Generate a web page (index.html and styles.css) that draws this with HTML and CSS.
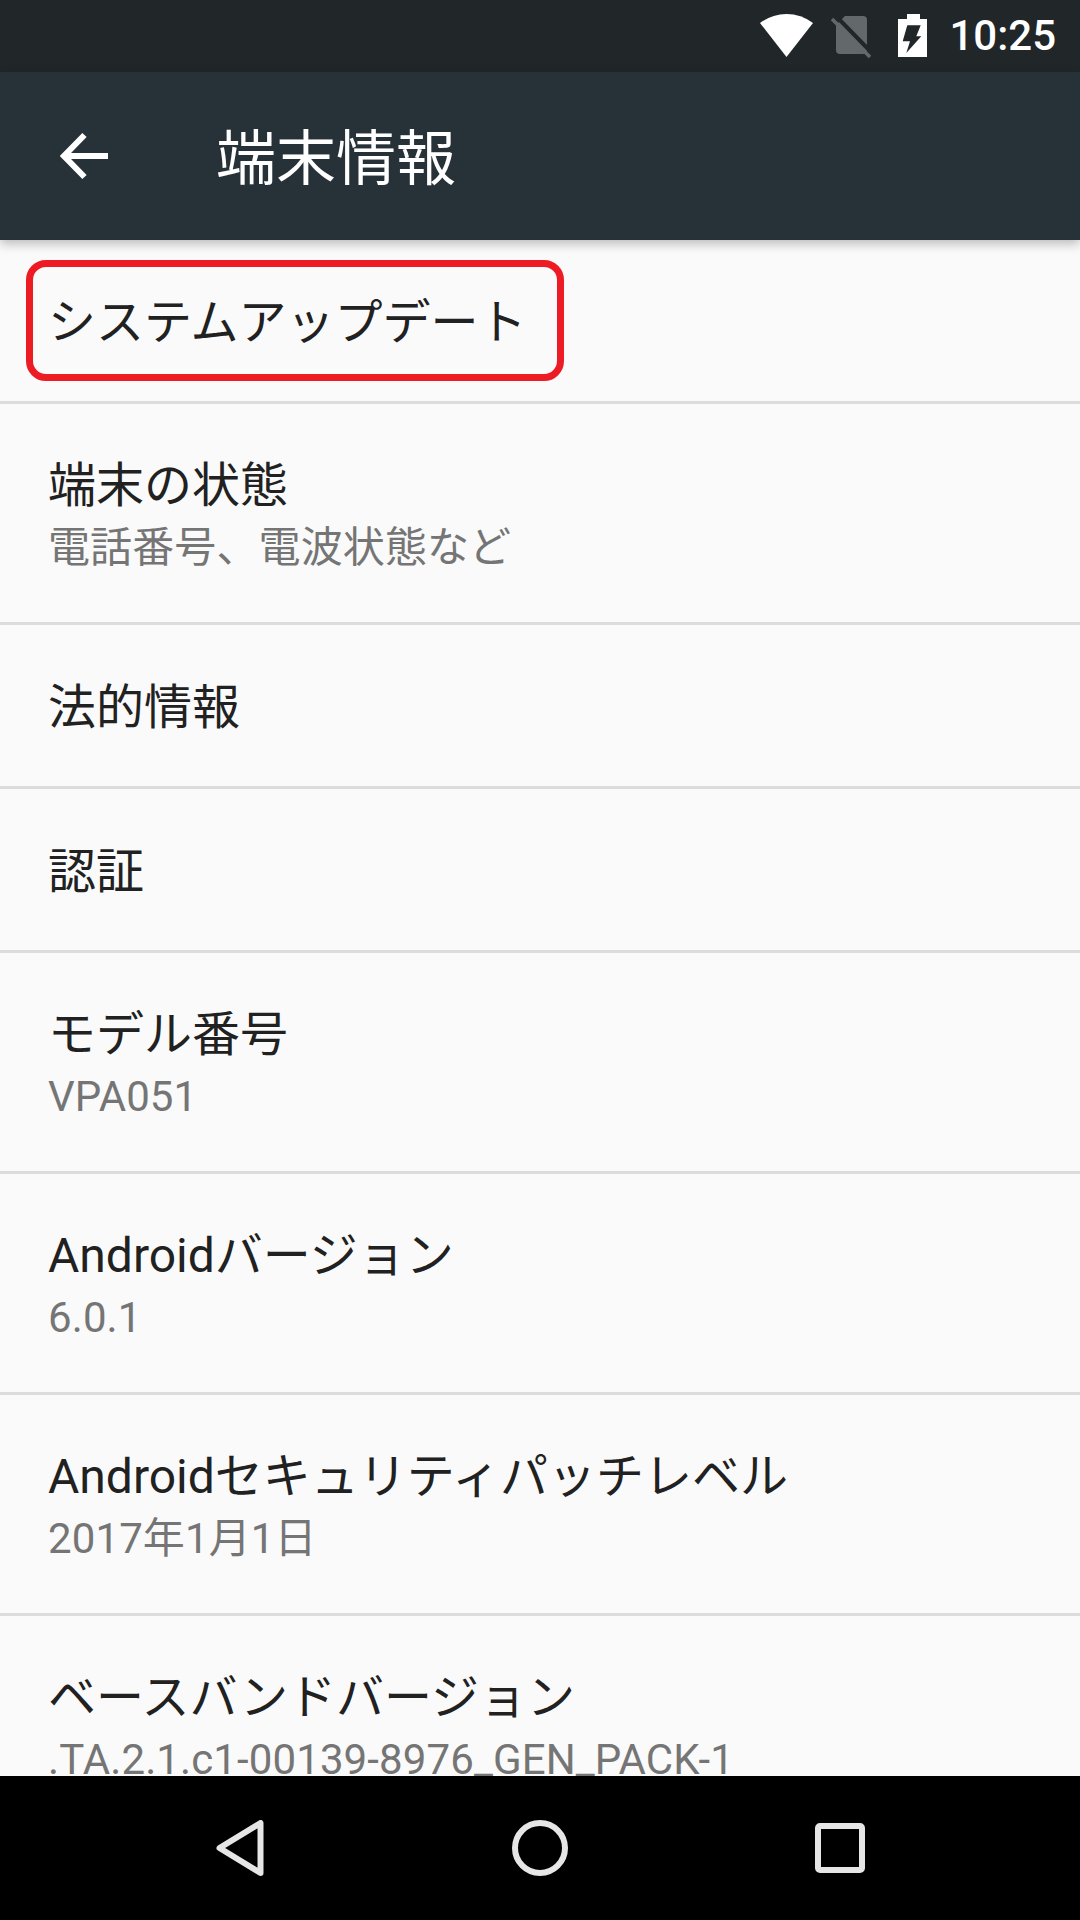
FILE: index.html
```html
<!DOCTYPE html>
<html lang="ja">
<head>
  <meta charset="UTF-8" />
  <meta name="viewport" content="width=device-width, initial-scale=1.0" />
  <title>端末情報</title>
  <link rel="stylesheet" href="styles.css">
</head>
<body>
  <div class="screen">
    <div class="status-bar">
      <svg class="ic-wifi" width="54" height="44" viewBox="0 0 54 44"><path d="M0 9Q12 0 26.500 0T53 9L26.500 43Z" fill="#fff"/></svg>
      <svg class="ic-sim" width="40" height="44" viewBox="0 0 40 44">
        <path d="M14 2H32Q36 2 36 6V36Q36 40 32 40H9Q5 40 5 36V11Z" fill="#63686a"/>
        <path d="M4 1L41 39" stroke="#212629" stroke-width="4"/>
        <path d="M1 5L39 43" stroke="#63686a" stroke-width="3.500"/>
      </svg>
      <svg class="ic-batt" width="29" height="44" viewBox="0 0 29 44">
        <path d="M9 0H22V5H29V43H0V5H9Z" fill="#fff"/>
        <path d="M9.300 11.300H22.700L18.300 22.300H23.300L8.300 39L12 27.300H4.700Z" fill="#212629"/>
      </svg>
      <span class="clock">10:25</span>
    </div>

    <div class="toolbar">
      <svg class="ic-back" width="48" height="48" viewBox="0 0 48 48"><path d="M48 24H4M24.500 3L4 24L24.500 45" fill="none" stroke="#fff" stroke-width="6"/></svg>
      <h1>端末情報</h1>
    </div>

    <div class="list">
      <div class="row row-one"><p class="row-title">システムアップデート</p></div>
      <div class="row row-two">
        <p class="row-title">端末の状態</p>
        <p class="row-sub">電話番号、電波状態など</p>
      </div>
      <div class="row row-one"><p class="row-title">法的情報</p></div>
      <div class="row row-one"><p class="row-title">認証</p></div>
      <div class="row row-two">
        <p class="row-title">モデル番号</p>
        <p class="row-sub">VPA051</p>
      </div>
      <div class="row row-two">
        <p class="row-title">Androidバージョン</p>
        <p class="row-sub">6.0.1</p>
      </div>
      <div class="row row-two">
        <p class="row-title">Androidセキュリティパッチレベル</p>
        <p class="row-sub">2017年1月1日</p>
      </div>
      <div class="row row-two">
        <p class="row-title">ベースバンドバージョン</p>
        <p class="row-sub">.TA.2.1.c1-00139-8976_GEN_PACK-1</p>
      </div>
      <div class="highlight"></div>
    </div>

    <div class="nav-bar">
      <svg width="48" height="56" viewBox="0 0 48 56"><path d="M44.500 3V53L3.500 28Z" fill="none" stroke="#e6e6e6" stroke-width="6" stroke-linejoin="round"/></svg>
      <svg width="56" height="56" viewBox="0 0 56 56"><circle cx="28" cy="28" r="25" fill="none" stroke="#e6e6e6" stroke-width="6"/></svg>
      <svg width="50" height="50" viewBox="0 0 50 50"><rect x="3" y="3" width="44" height="44" rx="2" fill="none" stroke="#e6e6e6" stroke-width="6"/></svg>
    </div>
  </div>
</body>
</html>
```

FILE: styles.css
```css
* {
  box-sizing: border-box;
}
body {
  margin: 0;
  font-family: Roboto, "Noto Sans CJK JP", sans-serif;
  background: #000;
}
p, h1 {
  margin: 0;
  font-weight: 400;
}
.screen {
  width: 1080px;
  height: 1920px;
  display: flex;
  flex-direction: column;
  background: #fafafa;
  overflow: hidden;
}
.status-bar {
  height: 72px;
  flex: none;
  background: #212629;
  display: flex;
  align-items: center;
  justify-content: flex-end;
  padding-right: 24px;
}
.ic-wifi {
  margin-right: 17px;
}
.ic-sim {
  margin-right: 27px;
}
.ic-batt {
  margin-right: 22px;
}
.clock {
  color: #fff;
  font-size: 42px;
  font-weight: 500;
  line-height: 1;
}
.toolbar {
  height: 168px;
  flex: none;
  background: #263238;
  display: flex;
  align-items: center;
  padding-left: 60px;
  color: #fff;
  position: relative;
  box-shadow: 0 4px 10px rgba(0,0,0,0.25);
  z-index: 1;
}
.toolbar h1 {
  font-size: 60px;
  margin-left: 108px;
  margin-bottom: 5px;
}
.list {
  flex: 1;
  min-height: 0;
  position: relative;
  overflow: hidden;
}
.row {
  display: flex;
  flex-direction: column;
  justify-content: center;
  padding-left: 48px;
  border-bottom: 3px solid #dcdcdc;
}
.row-one {
  height: 164px;
  padding-top: 4px;
}
.row-two {
  height: 221px;
  padding-top: 4px;
}
.row-title {
  font-size: 48px;
  line-height: 64px;
  color: #212121;
}
.row-sub {
  margin-top: 2px;
  font-size: 42px;
  line-height: 56px;
  letter-spacing: 0.11px;
  color: #757575;
  white-space: nowrap;
}
.highlight {
  position: absolute;
  left: 26px;
  top: 20px;
  width: 538px;
  height: 121px;
  border: 7px solid #ed1c24;
  border-radius: 20px;
}
.nav-bar {
  height: 144px;
  flex: none;
  background: #000;
  display: grid;
  grid-template-columns: repeat(3, 300px);
  justify-content: center;
  justify-items: center;
  align-items: center;
}
```
